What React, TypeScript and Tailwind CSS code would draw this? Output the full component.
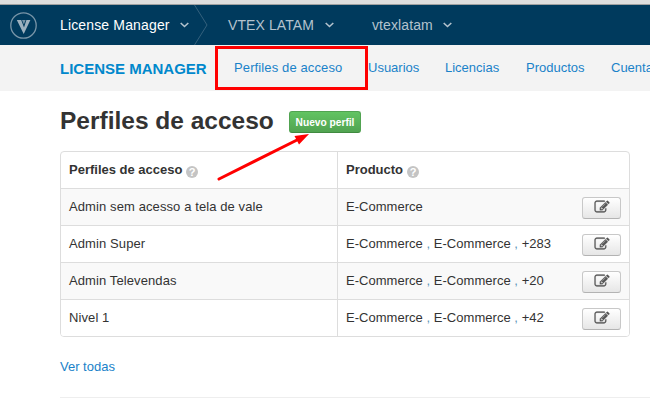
import React from "react";

const rows = [
  { name: "Admin sem acesso a tela de vale", products: ["E-Commerce"] },
  { name: "Admin Super", products: ["E-Commerce", "E-Commerce", "+283"] },
  { name: "Admin Televendas", products: ["E-Commerce", "E-Commerce", "+20"] },
  { name: "Nivel 1", products: ["E-Commerce", "E-Commerce", "+42"] },
];

function Chevron() {
  return (
    <svg className="block h-[6px] w-[9px] shrink-0" viewBox="0 0 9 6" fill="none" stroke="#b3c3ce" strokeWidth="1.6">
      <path d="M.7 1 4.5 4.5 8.3 1" />
    </svg>
  );
}

function Help() {
  return (
    <span className="mt-[6px] flex h-3 w-3 shrink-0 items-center justify-center rounded-full bg-[#c4c4c4] text-[11px] leading-none font-bold text-white">
      ?
    </span>
  );
}

function EditButton() {
  return (
    <button className="flex h-[22px] w-[39px] justify-center rounded-[3px] border border-[#c8c8c8] border-b-[#b3b3b3] bg-linear-to-b from-white to-[#e6e6e6] pt-[2px]">
      <svg className="h-[13px] w-[16px]" viewBox="-60 68 1912 1528" fill="#555" stroke="#555" strokeWidth="30">
        <path d="M888 1184l116-116-152-152-116 116v56h96v96h56zM1328 464q-16-16-33 1l-350 350q-17 17-1 33t33-1l350-350q17-17 1-33zM1408 1058v190q0 119-84.5 203.5t-203.5 84.5h-832q-119 0-203.5-84.5t-84.5-203.5v-832q0-119 84.5-203.5t203.5-84.5h832q63 0 117 25 15 7 18 23 3 17-9 29l-49 49q-14 14-32 8-23-6-45-6h-832q-66 0-113 47t-47 113v832q0 66 47 113t113 47h832q66 0 113-47t47-113v-126q0-13 9-22l64-64q15-15 35-7t20 29zM1312 320l288 288-672 672h-288v-288zM1756 452l-92 92-288-288 92-92q28-28 68-28t68 28l152 152q28 28 28 68t-28 68z" />
      </svg>
    </button>
  );
}

export default function App() {
  return (
    <div className="relative h-[401px] w-[650px] overflow-hidden bg-white font-['Liberation_Sans',Arial,sans-serif] text-[13px] leading-5 whitespace-nowrap text-[#333]">
      <div className="h-[5px] border-b border-[#a0a0a0] bg-[#dedede]" />
      <header className="flex h-10 items-center bg-[#003a5d] text-[14px] text-[#b3c3ce]">
        <svg className="ml-[10px] h-[27px] w-[27px] shrink-0" viewBox="0 0 27 27" fill="none">
          <circle cx="13.5" cy="13.5" r="12.7" stroke="#7895a8" strokeWidth="1.3" />
          <path d="M6.800 8h4.400L14 15.500 16.400 8h4L13.700 22Z" fill="#9db1bf" />
          <path d="M12 8h3.600l-1.700 4.500Z" fill="#7895a8" />
        </svg>
        <div className="ml-[23px] w-[120px] tracking-[0.15px] text-white">License Manager</div>
        <Chevron />
        <svg className="ml-[5px] h-10 w-[14px] shrink-0" viewBox="0 0 14 40" fill="none" stroke="#34617d">
          <path d="M.5 0 13 20 .5 40" />
        </svg>
        <div className="ml-[20px] w-[97px] tracking-[0.1px]">VTEX LATAM</div>
        <Chevron />
        <div className="ml-[38px] w-[71px] tracking-[0.1px]">vtexlatam</div>
        <Chevron />
      </header>
      <nav className="flex h-[46px] items-center bg-[#f3f3f3] pl-[60px] text-[#1a82c9]">
        <div className="w-[174px] shrink-0 pt-px text-[15px] font-bold text-[#0088cc]">LICENSE MANAGER</div>
        <a className="w-[134px] shrink-0 tracking-[0.12px]">Perfiles de acceso</a>
        <a className="w-[77px] shrink-0">Usuarios</a>
        <a className="w-[81px] shrink-0">Licencias</a>
        <a className="w-[85px] shrink-0">Productos</a>
        <a className="shrink-0">Cuenta</a>
      </nav>
      <main className="pl-[60px]">
        <div className="flex h-[60px] items-center">
          <h1 className="w-[229px] text-[24.5px] font-bold">Perfiles de acceso</h1>
          <button className="mt-[2px] flex h-[22px] w-[72px] items-center justify-center rounded-[3px] border border-[#51a351] border-b-[#3f8a3f] bg-linear-to-b from-[#62c462] to-[#51a351] pt-px text-[10.2px] font-bold text-white">
            Nuevo perfil
          </button>
        </div>
        <section className="w-[570px] overflow-hidden rounded-[4px] border border-[#ddd]">
          <div className="flex h-9 font-bold">
            <div className="flex w-[277px] border-r border-[#ddd] pt-2 pl-2">
              <span className="w-[117px]">Perfiles de acceso</span>
              <Help />
            </div>
            <div className="flex pt-2 pl-2">
              <span className="w-[61px]">Producto</span>
              <Help />
            </div>
          </div>
          {rows.map((r) => (
            <div key={r.name} className="flex h-[37px] border-t border-[#ddd] odd:bg-white even:bg-[#f9f9f9]">
              <div className="w-[277px] border-r border-[#ddd] pt-2 pl-2 tracking-[0.1px]">{r.name}</div>
              <div className="w-[244px] pt-2 pl-2 tracking-[0.03px]">
                {r.products.map((p, i) => (
                  <React.Fragment key={i}>
                    {i > 0 && <span className="text-[#5b96b8]"> , </span>}
                    {p}
                  </React.Fragment>
                ))}
              </div>
              <div className="pt-2">
                <EditButton />
              </div>
            </div>
          ))}
        </section>
        <a className="mt-[20px] block h-5 text-[#1a82c9]">Ver todas</a>
        <hr className="mt-[20px] border-[#eee]" />
      </main>
      <div className="absolute top-[46px] left-[215px] h-[44px] w-[153px] border-3 border-[#f00]" />
      <svg className="absolute top-[130px] left-[214px] h-[54px] w-[100px]" viewBox="214 130 100 54">
        <path d="M219 179 300 138.500" stroke="#f00" strokeWidth="3" strokeLinecap="round" />
        <path d="M309 134 294.500 136 299 144.500Z" fill="#f00" />
      </svg>
    </div>
  );
}
